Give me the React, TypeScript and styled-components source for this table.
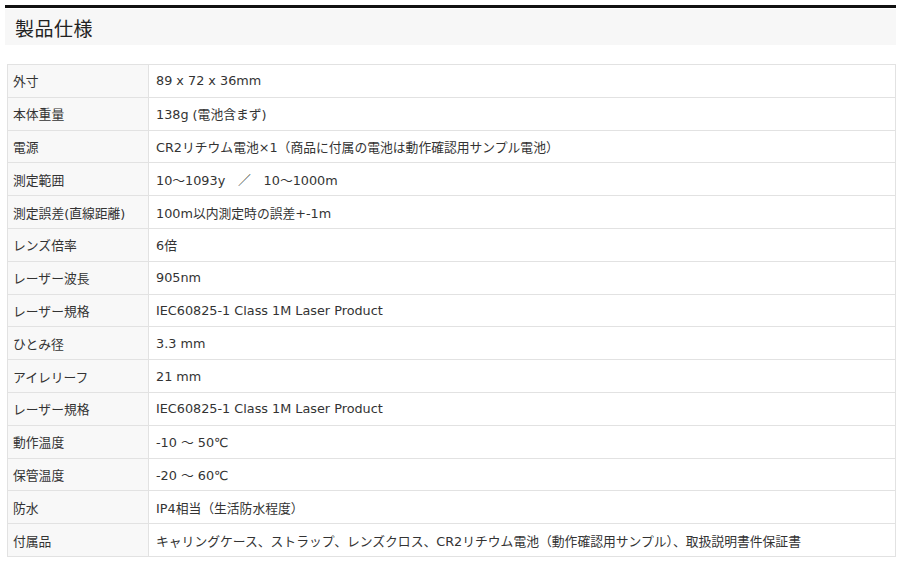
import * as React from "react";
import styled, { createGlobalStyle } from "styled-components";

const GlobalStyle = createGlobalStyle`
  html, body {
    margin: 0;
    padding: 0;
    background: #ffffff;
  }
  body {
    font-family: "DejaVu Sans", "Noto Sans CJK JP", sans-serif;
    color: #333333;
  }
`;

const Page = styled.div`
  width: 900px;
  height: 565px;
  padding: 5px 4px 0 5px;
  box-sizing: border-box;
  overflow: hidden;
`;

const Rule = styled.div`
  height: 3px;
  background: #111111;
`;

const Heading = styled.h2`
  margin: 1px 0 0 0;
  height: 36px;
  background: #f7f7f7;
  display: flex;
  align-items: center;
  padding-left: 10px;
  font-family: "Noto Sans CJK JP", sans-serif;
  font-size: 19px;
  font-weight: normal;
  color: #222222;
  letter-spacing: 0.5px;
`;

const SpecTable = styled.table`
  margin: 19px 0 0 2px;
  width: 889px;
  border-collapse: collapse;
  border: 1px solid #e0e0e0;
  table-layout: fixed;
`;

const LabelCol = styled.col`
  width: 141px;
`;

const Row = styled.tr`
  height: 32.8px;
`;

const Cell = styled.td<{ $label?: boolean }>`
  border: 1px solid #e2e2e2;
  padding: 0 8px 0 ${(p) => (p.$label ? "5px" : "7px")};
  background: ${(p) => (p.$label ? "#f8f8f8" : "#ffffff")};
  font-family: "DejaVu Sans", "Noto Sans CJK JP", sans-serif;
  font-size: 12.8px;
  color: #333333;
  white-space: nowrap;
  overflow: hidden;
  vertical-align: middle;
`;

const specs: [string, string][] = [
  ["外寸", "89 x 72 x 36mm"],
  ["本体重量", "138g (電池含まず)"],
  ["電源", "CR2リチウム電池×1（商品に付属の電池は動作確認用サンプル電池）"],
  ["測定範囲", "10～1093y　／　10～1000m"],
  ["測定誤差(直線距離)", "100m以内測定時の誤差+-1m"],
  ["レンズ倍率", "6倍"],
  ["レーザー波長", "905nm"],
  ["レーザー規格", "IEC60825-1 Class 1M Laser Product"],
  ["ひとみ径", "3.3 mm"],
  ["アイレリーフ", "21 mm"],
  ["レーザー規格", "IEC60825-1 Class 1M Laser Product"],
  ["動作温度", "-10 ～ 50℃"],
  ["保管温度", "-20 ～ 60℃"],
  ["防水", "IP4相当（生活防水程度）"],
  ["付属品", "キャリングケース、ストラップ、レンズクロス、CR2リチウム電池（動作確認用サンプル）、取扱説明書件保証書"],
];

export default function App() {
  return (
    <Page>
      <GlobalStyle />
      <Rule />
      <Heading>製品仕様</Heading>
      <SpecTable>
        <colgroup>
          <LabelCol />
          <col />
        </colgroup>
        <tbody>
          {specs.map(([label, value], i) => (
            <Row key={i}>
              <Cell $label>{label}</Cell>
              <Cell>{value}</Cell>
            </Row>
          ))}
        </tbody>
      </SpecTable>
    </Page>
  );
}
